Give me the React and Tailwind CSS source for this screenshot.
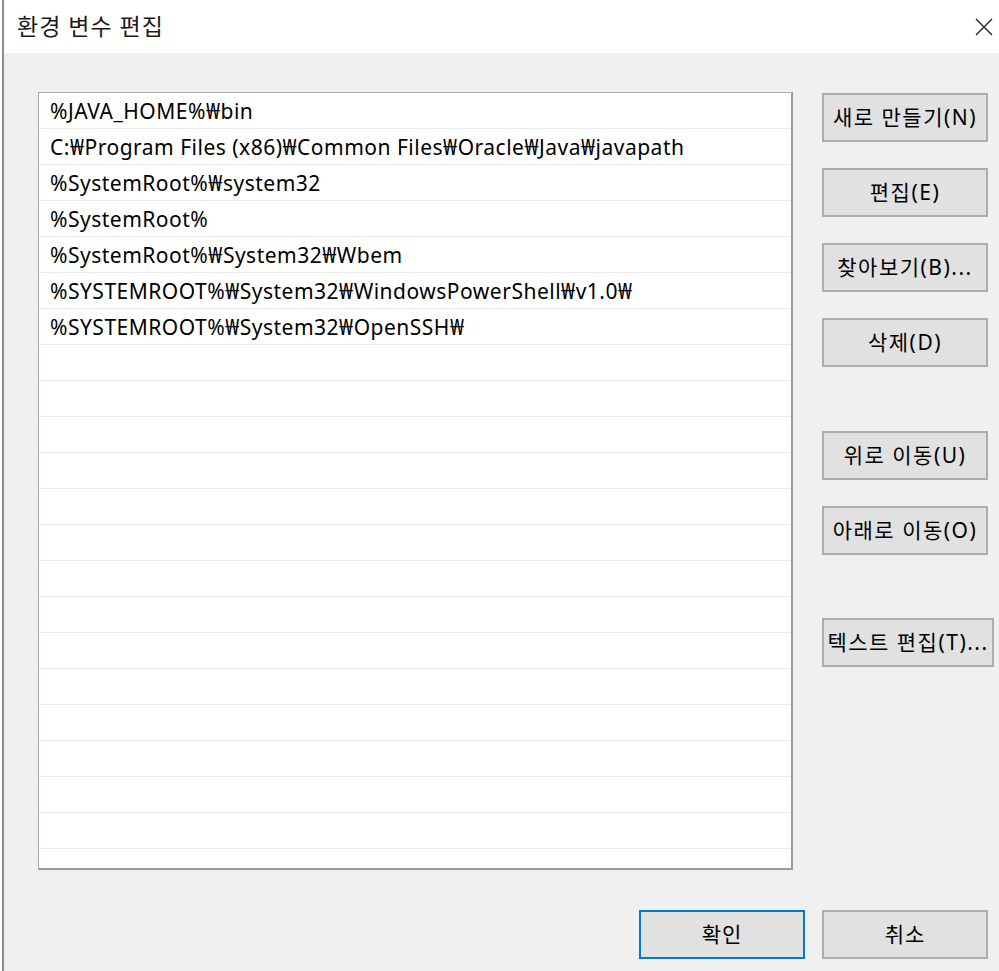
import React from 'react';

const paths = [
  '%JAVA_HOME%₩bin',
  'C:₩Program Files (x86)₩Common Files₩Oracle₩Java₩javapath',
  '%SystemRoot%₩system32',
  '%SystemRoot%',
  '%SystemRoot%₩System32₩Wbem',
  '%SYSTEMROOT%₩System32₩WindowsPowerShell₩v1.0₩',
  '%SYSTEMROOT%₩System32₩OpenSSH₩',
];

const font = { fontFamily: '"Noto Sans", "Noto Sans CJK KR", sans-serif' };

const SideButton = ({ label, wide }) => (
  <button
    className={
      'h-[49px] bg-[#e1e1e1] border-2 border-[#adadad] text-[21px] tracking-[1.5px] text-black flex items-center justify-center whitespace-nowrap ' +
      (wide ? 'w-[172px] tracking-[0.5px]' : 'w-[166px]')
    }
  >
    {label}
  </button>
);

const App = () => {
  const rows = Array.from({ length: 22 }, (_, i) => paths[i] || '');

  return (
    <div className="w-[999px] h-[971px] flex bg-white overflow-hidden" style={font}>
      <div className="w-[2px] bg-white" />
      <div className="flex-1 flex flex-col border-l-2 border-[#8c8c8c]">
        {/* Title bar */}
        <div className="h-[53px] bg-white flex items-center justify-between pl-[13px] pr-[6px]">
          <span className="text-[23px] text-[#1a1a1a] tracking-[1px]">환경 변수 편집</span>
          <svg width="18" height="18" viewBox="0 0 18 18">
            <path d="M1 1 L17 17 M17 1 L1 17" stroke="#222" strokeWidth="1.4" />
          </svg>
        </div>

        {/* Body */}
        <div className="flex-1 bg-[#f0f0f0] flex flex-col pl-[34px]">
          <div className="flex mt-[39px]">
            <div className="w-[755px] h-[778px] bg-white border-t border-l border-[#a8acb2] border-r-2 border-b-2 border-r-[#979ca4] border-b-[#979ca4] overflow-hidden">
              {rows.map((p, i) => (
                <div
                  key={i}
                  className="h-[36px] border-b border-[#ececec] pl-[11px] pt-[3px] flex items-center text-[21px] tracking-[0.5px] text-black whitespace-nowrap"
                >
                  {p}
                </div>
              ))}
            </div>

            <div className="ml-[29px] flex flex-col">
              <div className="mt-[1px]"><SideButton label="새로 만들기(N)" /></div>
              <div className="mt-[26px]"><SideButton label="편집(E)" /></div>
              <div className="mt-[26px]"><SideButton label="찾아보기(B)..." /></div>
              <div className="mt-[26px]"><SideButton label="삭제(D)" /></div>
              <div className="mt-[64px]"><SideButton label="위로 이동(U)" /></div>
              <div className="mt-[26px]"><SideButton label="아래로 이동(O)" /></div>
              <div className="mt-[63px]"><SideButton label="텍스트 편집(T)..." wide /></div>
            </div>
          </div>

          <div className="flex mt-[40px] pl-[601px] gap-[17px]">
            <button className="w-[166px] h-[49px] bg-[#e1e1e1] border-2 border-[#0078d7] text-[21px] tracking-[1px] text-black flex items-center justify-center">
              확인
            </button>
            <button className="w-[166px] h-[49px] bg-[#e1e1e1] border-2 border-[#adadad] text-[21px] tracking-[1px] text-black flex items-center justify-center">
              취소
            </button>
          </div>
        </div>
      </div>
    </div>
  );
};

export default App;
